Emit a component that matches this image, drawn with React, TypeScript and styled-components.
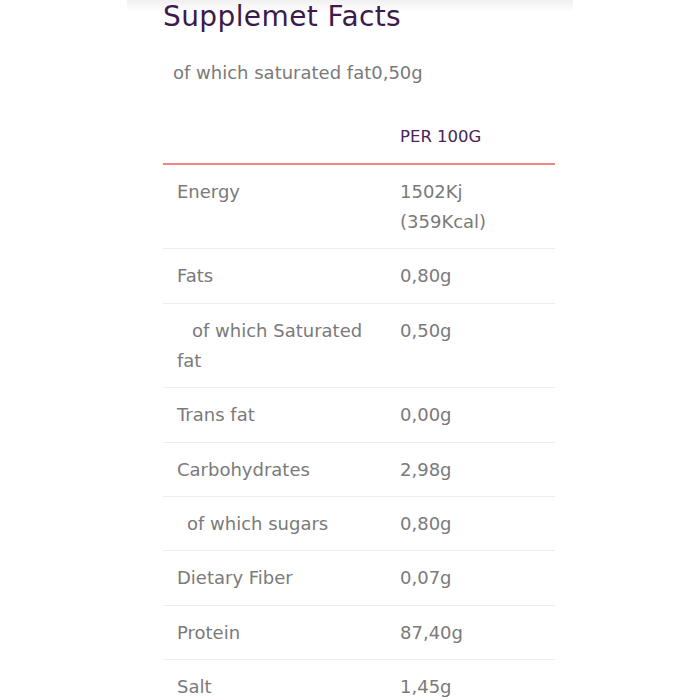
import styled, { createGlobalStyle } from 'styled-components';

const GlobalStyles = createGlobalStyle`
  html, body {
    margin: 0;
    padding: 0;
    background: #ffffff;
  }
  body {
    font-family: 'DejaVu Sans', 'Noto Sans', sans-serif;
  }
`;

const Page = styled.div`
  width: 700px;
  height: 700px;
  overflow: hidden;
  position: relative;
  padding-left: 163px;
  box-sizing: border-box;
`;

// тень от карточки сверху
const TopShade = styled.div`
  position: absolute;
  top: 0;
  left: 127px;
  width: 446px;
  height: 12px;
  background: linear-gradient(#f0f0f0, rgba(255, 255, 255, 0));
`;

const Card = styled.div`
  width: 392px;
  position: relative;
`;

const Title = styled.h2`
  margin: 0;
  padding-top: 2px;
  font-size: 28px;
  line-height: 30px;
  font-weight: 500;
  color: #3d1a4b;
  letter-spacing: 0.4px;
`;

const Note = styled.p`
  margin: 26px 0 0 10px;
  font-size: 18px;
  line-height: 30px;
  color: #7a7a7a;
`;

const Table = styled.div`
  margin-top: 34px;
  display: grid;
  grid-template-columns: 237px 1fr;
`;

const HeadCell = styled.div`
  padding: 0 0 11px 0;
  font-size: 16.5px;
  line-height: 30px;
  color: #4a2358;
  border-bottom: 2px solid #f08585;
`;

const Cell = styled.div<{ $indent?: number; $last?: boolean }>`
  padding: 12px 14px 11.4px 14px;
  font-size: 18px;
  line-height: 30px;
  color: #7a7a7a;
  border-bottom: ${p => (p.$last ? 'none' : '1px solid #ededed')};
  text-indent: ${p => p.$indent ?? 0}px;
`;

const ValueCell = styled(Cell)`
  padding-left: 0;
`;

const rows: { label: string; value: string; indent?: number }[] = [
  { label: 'Energy', value: '1502Kj (359Kcal)' },
  { label: 'Fats', value: '0,80g' },
  { label: 'of which Saturated fat', value: '0,50g', indent: 15 },
  { label: 'Trans fat', value: '0,00g' },
  { label: 'Carbohydrates', value: '2,98g' },
  { label: 'of which sugars', value: '0,80g', indent: 10 },
  { label: 'Dietary Fiber', value: '0,07g' },
  { label: 'Protein', value: '87,40g' },
  { label: 'Salt', value: '1,45g' },
];

const App = () => {
  return (
    <Page>
      <GlobalStyles />
      <TopShade />
      <Card>
        <Title>Supplemet Facts</Title>
        <Note>of which saturated fat0,50g</Note>
        <Table>
          <HeadCell />
          <HeadCell>PER 100G</HeadCell>
          {rows.map((r, i) => (
            <>
              <Cell key={r.label} $indent={r.indent} $last={i === rows.length - 1}>
                {r.label}
              </Cell>
              <ValueCell key={r.label + '-v'} $last={i === rows.length - 1}>
                {r.value}
              </ValueCell>
            </>
          ))}
        </Table>
      </Card>
    </Page>
  );
};

export default App;
